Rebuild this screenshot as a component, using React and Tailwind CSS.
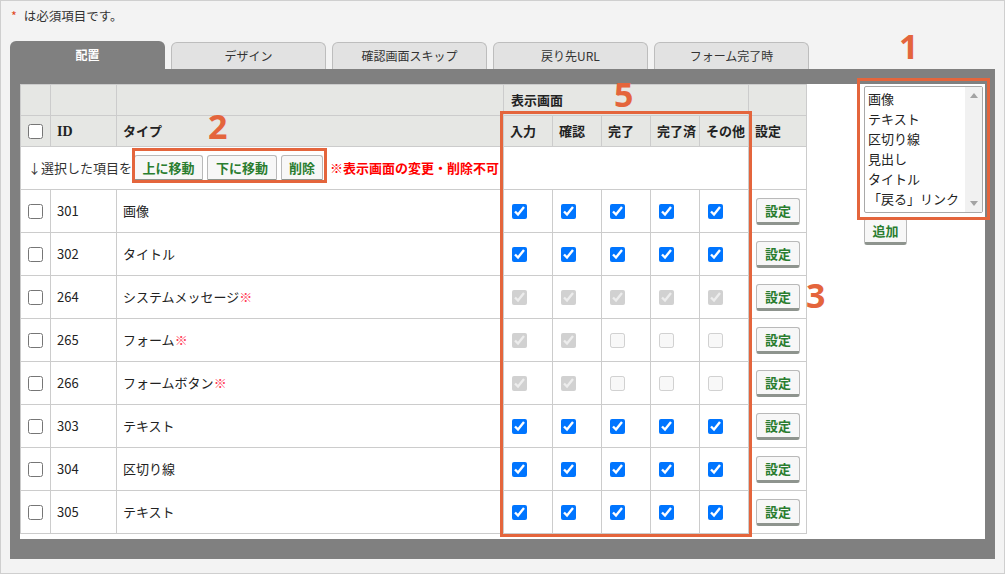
import React from "react";

const ORANGE = "border-[#e4653c]";

function Btn({ children, className = "" }) {
  return (
    <div
      className={
        "inline-flex items-center justify-center h-[27px] rounded-[3px] border border-[#b9b9b9] border-b-[3px] border-b-[#8e948e] bg-[#f7f7f7] text-[#2a7d2f] text-[13px] font-bold leading-none " +
        className
      }
    >
      {children}
    </div>
  );
}

function Cb({ checked = false, disabled = false }) {
  return (
    <input
      type="checkbox"
      defaultChecked={checked}
      disabled={disabled}
      className="w-[15px] h-[15px] m-0 block"
    />
  );
}

const rows = [
  { id: "301", type: "画像", mode: "all" },
  { id: "302", type: "タイトル", mode: "all" },
  { id: "264", type: "システムメッセージ", mark: true, mode: "disAll" },
  { id: "265", type: "フォーム", mark: true, mode: "dis2" },
  { id: "266", type: "フォームボタン", mark: true, mode: "dis2" },
  { id: "303", type: "テキスト", mode: "all" },
  { id: "304", type: "区切り線", mode: "all" },
  { id: "305", type: "テキスト", mode: "all" },
];

const tabs = ["配置", "デザイン", "確認画面スキップ", "戻り先URL", "フォーム完了時"];
const screens = ["入力", "確認", "完了", "完了済", "その他"];
const options = ["画像", "テキスト", "区切り線", "見出し", "タイトル", "「戻る」リンク"];

export default function App() {
  const td = "border border-[#cccccc] p-0";
  const th = "border border-[#cccccc] bg-[#e6e7e4] p-0 text-left font-bold text-[13px] text-[#222]";
  return (
    <div className="relative w-[1005px] h-[574px] bg-[#f3f3f3] border border-[#cfcfcf] text-[#333] font-['Noto_Sans_CJK_JP','Noto_Sans',sans-serif] overflow-hidden">
      {/* required note */}
      <div className="h-[40px] pl-[10px] pt-[6px] text-[12.5px] leading-[18px]">
        <span className="text-[#e0461d]">*</span>
        <span className="ml-[7px]">は必須項目です。</span>
      </div>

      {/* tabs */}
      <div className="flex items-end gap-[6px] pl-[9px] h-[28px]">
        {tabs.map((t, i) =>
          i === 0 ? (
            <div
              key={t}
              className="w-[155px] h-[28px] rounded-t-[6px] bg-[#808080] text-white font-bold text-[12px] flex items-center justify-center"
            >
              {t}
            </div>
          ) : (
            <div
              key={t}
              className="w-[155px] h-[27px] rounded-t-[6px] bg-[#e2e2e2] border border-b-0 border-[#bdbdbd] text-[#333] text-[12px] flex items-center justify-center"
            >
              {t}
            </div>
          )
        )}
      </div>

      {/* panel */}
      <div className="ml-[9px] w-[985px] h-[490px] bg-[#808080] pt-[15px] pl-[10px]">
        <div className="w-[965px] h-[455px] bg-white flex">
          <table className="table-fixed border-collapse w-[786px] h-fit text-[13px] text-[#222]">
            <colgroup>
              <col className="w-[30px]" />
              <col className="w-[66px]" />
              <col className="w-[387px]" />
              <col className="w-[49px]" />
              <col className="w-[49px]" />
              <col className="w-[49px]" />
              <col className="w-[49px]" />
              <col className="w-[49px]" />
              <col className="w-[58px]" />
            </colgroup>
            <thead>
              <tr className="h-[31px]">
                <th className={th}></th>
                <th className={th}></th>
                <th className={th}></th>
                <th className={th + " pl-[7px] border-b-0"} colSpan={5}>
                  表示画面
                </th>
                <th className={th}></th>
              </tr>
              <tr className="h-[31px]">
                <th className={th}>
                  <div className="flex justify-center">
                    <Cb />
                  </div>
                </th>
                <th className={th + " pl-[6px] font-['Liberation_Serif',serif] text-[14px]"}>ID</th>
                <th className={th + " pl-[6px]"}>タイプ</th>
                {screens.map((s) => (
                  <th key={s} className={th + " pl-[6px]"}>
                    {s}
                  </th>
                ))}
                <th className={th + " pl-[6px]"}>設定</th>
              </tr>
            </thead>
            <tbody>
              <tr className="h-[43px]">
                <td className={td + " pl-[7px]"} colSpan={3}>
                  <div className="flex items-center text-[13px] text-[#333] whitespace-nowrap">
                    <span>↓選択した項目を</span>
                    <Btn className="ml-[2px] w-[69px]">上に移動</Btn>
                    <Btn className="ml-[4px] w-[70px]">下に移動</Btn>
                    <Btn className="ml-[4px] w-[42px]">削除</Btn>
                    <span className="ml-[7px] text-[#ff0000] font-bold text-[13px]">
                      ※表示画面の変更・削除不可
                    </span>
                  </div>
                </td>
                <td className={td} colSpan={5}></td>
                <td className={td}></td>
              </tr>
              {rows.map((r) => (
                <tr key={r.id} className="h-[43px]">
                  <td className={td}>
                    <div className="flex justify-center">
                      <Cb />
                    </div>
                  </td>
                  <td className={td + " pl-[6px]"}>{r.id}</td>
                  <td className={td + " pl-[6px]"}>
                    {r.type}
                    {r.mark && <span className="text-[#ff3a55]">※</span>}
                  </td>
                  {screens.map((s, i) => {
                    let checked = true;
                    let disabled = false;
                    if (r.mode === "disAll") disabled = true;
                    if (r.mode === "dis2") {
                      disabled = true;
                      checked = i < 2;
                    }
                    return (
                      <td key={s} className={td + " pl-[8px]"}>
                        <Cb checked={checked} disabled={disabled} />
                      </td>
                    );
                  })}
                  <td className={td + " pl-[7px]"}>
                    <Btn className="w-[44px] h-[26px]">設定</Btn>
                  </td>
                </tr>
              ))}
            </tbody>
          </table>

          {/* right column */}
          <div className="ml-[57px] pt-[2px] flex flex-col items-start">
            <div className="w-[119px] h-[127px] border border-[#a9a9a9] rounded-[2px] flex bg-white">
              <div className="flex-1 pl-[3px] pt-[2px] text-[13px] leading-[20px] text-[#222] whitespace-nowrap overflow-hidden">
                {options.map((o) => (
                  <div key={o}>{o}</div>
                ))}
              </div>
              <div className="w-[17px] bg-[#f1f1f1] flex flex-col justify-between items-center py-[6px]">
                <svg width="8" height="5" viewBox="0 0 8 5">
                  <path d="M0 5 L4 0 L8 5 Z" fill="#a3a3a3" />
                </svg>
                <svg width="8" height="5" viewBox="0 0 8 5">
                  <path d="M0 0 L8 0 L4 5 Z" fill="#a3a3a3" />
                </svg>
              </div>
            </div>
            <Btn className="mt-[5px] w-[43px] h-[26px]">追加</Btn>
          </div>
        </div>
      </div>

      {/* annotations */}
      <div className={"absolute left-[856px] top-[77px] w-[133px] h-[142px] border-[3px] " + ORANGE}></div>
      <div className={"absolute left-[131px] top-[147px] w-[195px] h-[35px] border-[3px] " + ORANGE}></div>
      <div className={"absolute left-[499px] top-[110px] w-[252px] h-[426px] border-[3px] " + ORANGE}></div>

      <div className="absolute left-[898px] top-[28px] text-[34px] leading-none font-bold text-[#e4653c] font-['Open_Sans',sans-serif]">1</div>
      <div className="absolute left-[207px] top-[108px] text-[34px] leading-none font-bold text-[#e4653c] font-['Open_Sans',sans-serif]">2</div>
      <div className="absolute left-[613px] top-[76px] text-[34px] leading-none font-bold text-[#e4653c] font-['Open_Sans',sans-serif]">5</div>
      <div className="absolute left-[805px] top-[277px] text-[34px] leading-none font-bold text-[#e4653c] font-['Open_Sans',sans-serif]">3</div>
    </div>
  );
}
